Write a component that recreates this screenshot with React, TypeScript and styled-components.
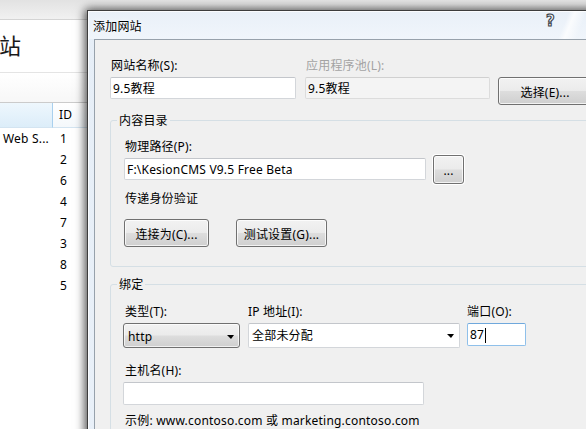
import React from "react";
import styled, { createGlobalStyle } from "styled-components";

const FONT = `"Noto Sans", "Noto Sans CJK SC", sans-serif`;

const Global = createGlobalStyle`
  html, body { margin: 0; padding: 0; background: #ffffff; }
  body { width: 586px; height: 429px; overflow: hidden; }
  * { box-sizing: border-box; }
`;

const Screen = styled.div`
  position: relative;
  width: 586px;
  height: 429px;
  overflow: hidden;
  font-family: ${FONT};
  font-size: 12px;
  line-height: 16px;
  letter-spacing: 0.2px;
  color: #000;
`;

/* ---------- background IIS manager window ---------- */
const BgWindow = styled.div`
  display: flex;
  flex-direction: column;
  width: 586px;
  height: 429px;
  background: #ffffff;
`;

const BgTopStrip = styled.div`
  height: 20px;
  flex-shrink: 0;
  background: linear-gradient(#e2e2e2, #f1f1f1);
  border-bottom: 1px solid #d4d4d4;
`;

const BgTitle = styled.div`
  height: 53px;
  flex-shrink: 0;
  display: flex;
  align-items: center;
  padding-bottom: 2px;
  margin-left: -1px;
  font-size: 22px;
  line-height: 26px;
  letter-spacing: 0;
  color: #1a1a1a;
  border-bottom: 1px solid #e4e4e4;
`;

const BgToolbar = styled.div`
  height: 30px;
  flex-shrink: 0;
  background: linear-gradient(#ffffff, #f7f7f7);
  border-bottom: 1px solid #cbcbcb;
`;

const ListGrid = styled.div`
  display: grid;
  grid-template-columns: 53px 1fr;
`;

const HeadCell = styled.div<{ $active?: boolean }>`
  height: 25px;
  display: flex;
  align-items: center;
  padding-left: 6px;
  background: ${(p) =>
    p.$active
      ? "linear-gradient(#eef7fd, #dcedf9)"
      : "linear-gradient(#ffffff, #f4f8fb)"};
  border-right: 1px solid ${(p) => (p.$active ? "#a9d0ee" : "#e3edf5")};
  border-bottom: 1px solid #d3e4f1;
`;

const RowCell = styled.div<{ $pad: number }>`
  height: 21px;
  display: flex;
  align-items: center;
  padding-left: ${(p) => p.$pad}px;
  white-space: nowrap;
  overflow: hidden;
`;

/* ---------- dialog window ---------- */
const Dialog = styled.div`
  position: absolute;
  left: 87px;
  top: 10px;
  width: 600px;
  height: 500px;
  display: flex;
  flex-direction: column;
  border: 1px solid #3d3d3d;
  background: linear-gradient(115deg, #e6eef7 0%, #edf3fa 55%, #f6f9fc 70%, #e9f0f8 100%);
  box-shadow: -3px 0 9px rgba(0, 0, 0, 0.5), 0 -2px 8px rgba(0, 0, 0, 0.3);
`;

const TitleBar = styled.div`
  height: 28px;
  flex-shrink: 0;
  display: flex;
  align-items: center;
  padding-left: 5px;
  background:
    linear-gradient(112deg, transparent 0 79%, rgba(255,255,255,0.75) 80%, transparent 82%),
    linear-gradient(112deg, transparent 0 91%, rgba(255,255,255,0.8) 92%, transparent 95%),
    linear-gradient(#e9f0f8, #f0f5fb);
  box-shadow: inset 1px 1px 0 rgba(255, 255, 255, 0.8);
`;

const TitleText = styled.div`
  flex: 1;
  padding-top: 3px;
  color: #000;
  text-shadow: 0 0 6px rgba(255, 255, 255, 1);
`;

const HelpGlyph = styled.div`
  align-self: flex-start;
  margin-top: 2px;
  margin-right: 131px;
  font-family: "DejaVu Sans", sans-serif;
  font-size: 15px;
  font-weight: bold;
  line-height: 16px;
  color: #f4f7fb;
  -webkit-text-stroke: 1.1px #3e444b;
`;

const Frame = styled.div`
  flex: 1;
  display: flex;
  padding-left: 6px;
  box-shadow: inset 1px 0 0 rgba(255, 255, 255, 0.8);
`;

const Client = styled.div`
  flex: 1;
  background: #f0f0f0;
  border-top: 1px solid #97a1ab;
  border-left: 1px solid #97a1ab;
  padding: 17px 14px 0 15px;
  display: flex;
  flex-direction: column;
`;

const TopGrid = styled.div`
  display: grid;
  grid-template-columns: 186px 185px 94px;
  column-gap: 9px;
  row-gap: 4px;
  align-items: start;
`;

const Label = styled.div<{ $dim?: boolean; $pl?: number; $lh?: number }>`
  height: 16px;
  line-height: ${(p) => p.$lh ?? 18}px;
  flex-shrink: 0;
  padding-left: ${(p) => p.$pl ?? 1}px;
  white-space: nowrap;
  color: ${(p) => (p.$dim ? "#a3a3a3" : "#000")};
`;

const TextBox = styled.div<{ $w?: number; $h?: number; $dim?: boolean; $focus?: boolean; $mt?: number }>`
  width: ${(p) => (p.$w ? `${p.$w}px` : "auto")};
  height: ${(p) => p.$h ?? 22}px;
  margin-top: ${(p) => p.$mt ?? 0}px;
  flex-shrink: 0;
  display: flex;
  align-items: center;
  padding: 1px 0 0 2px;
  white-space: nowrap;
  background: ${(p) => (p.$dim ? "#f4f4f4" : "#ffffff")};
  border: 1px solid ${(p) => (p.$focus ? "#8fc0ea" : p.$dim ? "#dcdcdc" : "#d3d6da")};
  border-top-color: ${(p) => (p.$focus ? "#6fa8dc" : p.$dim ? "#d0d0d0" : "#c3c6cb")};
  border-radius: 2px;
`;

const Caret = styled.span`
  display: inline-block;
  width: 1px;
  height: 15px;
  margin-left: 1px;
  background: #000;
`;

const Button = styled.div<{ $w: number; $h?: number; $ring?: boolean; $ml?: number }>`
  width: ${(p) => p.$w}px;
  height: ${(p) => p.$h ?? 28}px;
  margin-left: ${(p) => p.$ml ?? 0}px;
  flex-shrink: 0;
  display: flex;
  align-items: center;
  justify-content: center;
  padding-top: 3px;
  border: 1px solid #707070;
  border-radius: 3px;
  background: linear-gradient(#f2f2f2 0%, #ebebeb 48%, #dddddd 52%, #cfcfcf 100%);
  box-shadow: inset 0 0 0 1px rgba(255, 255, 255, 0.75)
    ${(p) => (p.$ring ? ", 0 0 0 1px #ffffff" : "")};
  white-space: nowrap;
  color: #000;
`;

const Group = styled.div<{ $mt: number }>`
  margin-top: ${(p) => p.$mt}px;
  flex-shrink: 0;
  border: 1px solid #d5dfe5;
  border-radius: 3px;
  padding: 0 0 19px 13px;
  display: flex;
  flex-direction: column;
`;

const GroupTitle = styled.div`
  align-self: flex-start;
  margin: -9px 0 0 -7px;
  padding: 0 2px;
  height: 16px;
  line-height: 18px;
  flex-shrink: 0;
  background: #f0f0f0;
`;

const Spacer = styled.div<{ $h: number }>`
  height: ${(p) => p.$h}px;
  flex-shrink: 0;
`;

const Row = styled.div<{ $gap: number; $ml?: number }>`
  display: flex;
  flex-shrink: 0;
  align-items: flex-start;
  gap: ${(p) => p.$gap}px;
  margin-left: ${(p) => p.$ml ?? 0}px;
`;

const BindGrid = styled.div`
  display: grid;
  flex-shrink: 0;
  grid-template-columns: 117px 212px 58px;
  column-gap: 8px;
  row-gap: 4px;
  align-items: start;
  margin-left: -1px;
`;

const DropList = styled.div`
  height: 25px;
  display: flex;
  align-items: center;
  justify-content: space-between;
  padding: 2px 5px 0 4px;
  border: 1px solid #707070;
  border-radius: 3px;
  background: linear-gradient(#f2f2f2 0%, #ebebeb 48%, #dddddd 52%, #cfcfcf 100%);
  box-shadow: inset 0 0 0 1px rgba(255, 255, 255, 0.7);
`;

const DropEdit = styled.div`
  height: 25px;
  display: flex;
  align-items: center;
  justify-content: space-between;
  padding: 1px 5px 0 3px;
  background: #ffffff;
  border: 1px solid #d3d6da;
  border-top-color: #c3c6cb;
  border-radius: 2px;
`;

const Arrow = styled.span`
  width: 0;
  height: 0;
  border-left: 4px solid transparent;
  border-right: 3px solid transparent;
  border-top: 4px solid #000;
`;

const PortCell = styled.div`
  margin-left: -1px;
`;

const sites = [
  { name: "Web S...", id: "1" },
  { name: "", id: "2" },
  { name: "", id: "6" },
  { name: "", id: "4" },
  { name: "", id: "7" },
  { name: "", id: "3" },
  { name: "", id: "8" },
  { name: "", id: "5" },
];

export default function App() {
  return (
    <Screen>
      <Global />
      <BgWindow>
        <BgTopStrip />
        <BgTitle>站</BgTitle>
        <BgToolbar />
        <ListGrid>
          <HeadCell $active />
          <HeadCell>ID</HeadCell>
          {sites.map((s, i) => (
            <React.Fragment key={i}>
              <RowCell $pad={3}>{s.name}</RowCell>
              <RowCell $pad={7}>{s.id}</RowCell>
            </React.Fragment>
          ))}
        </ListGrid>
      </BgWindow>

      <Dialog>
        <TitleBar>
          <TitleText>添加网站</TitleText>
          <HelpGlyph>?</HelpGlyph>
        </TitleBar>
        <Frame>
          <Client>
            <TopGrid>
              <Label>网站名称(S):</Label>
              <Label $dim>应用程序池(L):</Label>
              <div />
              <TextBox>9.5教程</TextBox>
              <TextBox $dim>9.5教程</TextBox>
              <Button $w={94} $ml={-1}>选择(E)...</Button>
            </TopGrid>

            <Group $mt={15}>
              <GroupTitle>内容目录</GroupTitle>
              <Spacer $h={10} />
              <Label>物理路径(P):</Label>
              <Spacer $h={1} />
              <Row $gap={7}>
                <TextBox $w={302} $mt={3}>F:\KesionCMS V9.5 Free Beta</TextBox>
                <Button $w={31} $h={29} $ring>...</Button>
              </Row>
              <Spacer $h={6} />
              <Label>传递身份验证</Label>
              <Spacer $h={13} />
              <Row $gap={27}>
                <Button $w={85}>连接为(C)...</Button>
                <Button $w={91}>测试设置(G)...</Button>
              </Row>
            </Group>

            <Group $mt={17}>
              <GroupTitle>绑定</GroupTitle>
              <Spacer $h={11} />
              <BindGrid>
                <Label $pl={2}>类型(T):</Label>
                <Label $pl={0}>IP 地址(I):</Label>
                <PortCell>
                  <Label $pl={0}>端口(O):</Label>
                </PortCell>
                <DropList>
                  <span>http</span>
                  <Arrow />
                </DropList>
                <DropEdit>
                  <span>全部未分配</span>
                  <Arrow />
                </DropEdit>
                <PortCell>
                  <TextBox $h={23} $focus>
                    87
                    <Caret />
                  </TextBox>
                </PortCell>
              </BindGrid>
              <Spacer $h={14} />
              <Label>主机名(H):</Label>
              <Spacer $h={4} />
              <Row $gap={0} $ml={-1}>
                <TextBox $w={301} $h={23} />
              </Row>
              <Spacer $h={10} />
              <Label $lh={12}>示例: www.contoso.com 或 marketing.contoso.com</Label>
            </Group>
          </Client>
        </Frame>
      </Dialog>
    </Screen>
  );
}
